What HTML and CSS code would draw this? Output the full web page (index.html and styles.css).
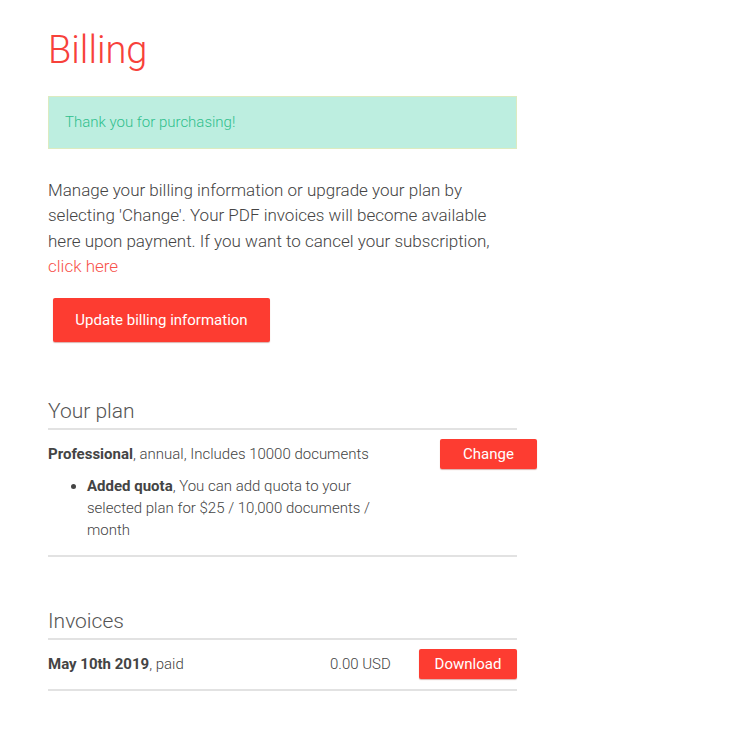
FILE: index.html
```html
<!DOCTYPE html>
<html>
<head>
<meta charset="utf-8">
<link rel="stylesheet" href="styles.css">
</head>
<body>
<div class="page">
  <h1 class="title">Billing</h1>
  <div class="alert">Thank you for purchasing!</div>
  <p class="intro">Manage your billing information or upgrade your plan by selecting 'Change'. Your PDF invoices will become available here upon payment. If you want to cancel your subscription, <a class="link" href="#">click here</a></p>
  <button class="btn btn-lg">Update billing information</button>

  <section class="section plan">
    <h2 class="section-title">Your plan</h2>
    <div class="row plan-row">
      <div class="plan-info">
        <div><b>Professional</b>, annual, Includes 10000 documents</div>
        <ul class="addons">
          <li><b>Added quota</b>, You can add quota to your selected plan for $25 / 10,000 documents / month</li>
        </ul>
      </div>
      <button class="btn btn-sm btn-change">Change</button>
    </div>
  </section>

  <section class="section invoices">
    <h2 class="section-title">Invoices</h2>
    <div class="row invoice-row">
      <div class="inv-date"><b>May 10th 2019</b>, paid</div>
      <div class="inv-amount">0.00 USD</div>
      <button class="btn btn-sm btn-dl">Download</button>
    </div>
  </section>
</div>
</body>
</html>
```
FILE: styles.css
```css
* { box-sizing: border-box; }
body {
  margin: 0;
  background: #fff;
  font-family: Roboto, "Liberation Sans", sans-serif;
  color: #555;
}
.page {
  padding: 24px 0 40px 48px;
  width: 517px;
}
.title {
  margin: 0;
  font-size: 38px;
  font-weight: 300;
  line-height: 52px;
  color: #f7413a;
}
.alert {
  margin-top: 20px;
  height: 53px;
  background: #bdeee0;
  border: 1px solid #dcebc0;
  color: #2ebf8d;
  font-size: 15px;
  font-weight: 300;
  padding: 16px 0 0 16px;
  line-height: 18px;
}
.intro {
  margin: 29px 0 0;
  font-size: 17px;
  line-height: 25.3px;
  font-weight: 300;
  color: #444;
}
.link {
  color: #f7514a;
  text-decoration: none;
}
.btn {
  background: #fd3c31;
  color: #fff;
  border: none;
  border-radius: 2px;
  font-family: Roboto, "Liberation Sans", sans-serif;
  box-shadow: 0 1px 1px rgba(150, 30, 20, 0.35);
  cursor: pointer;
  padding: 0;
}
.btn-lg {
  display: block;
  margin: 19px 0 0 5px;
  width: 217px;
  height: 44px;
  font-size: 15px;
}
.btn-sm {
  height: 30px;
  font-size: 15px;
  flex: none;
}
.section-title {
  margin: 0;
  font-size: 21px;
  font-weight: 300;
  line-height: 24px;
  color: #555;
  padding-bottom: 5px;
  border-bottom: 2px solid #e2e2e2;
}
.plan { margin-top: 57px; }
.invoices { margin-top: 52px; }
.row {
  display: flex;
  align-items: flex-start;
  border-bottom: 2px solid #e2e2e2;
  font-size: 15px;
  font-weight: 300;
  color: #444;
}
.row b { font-weight: 700; color: #444; }
.plan-row {
  padding: 9px 0 14px;
  justify-content: space-between;
}
.plan-info {
  width: 345px;
  padding-top: 6px;
  line-height: 18px;
}
.addons {
  margin: 12px 0 0;
  padding-left: 39px;
  line-height: 22px;
}
.btn-change {
  width: 97px;
  margin-right: -20px;
}
.invoice-row {
  padding: 9px 0 10px;
  align-items: center;
}
.inv-date { flex: 1; }
.inv-amount { width: 89px; }
.btn-dl { width: 98px; }
```
